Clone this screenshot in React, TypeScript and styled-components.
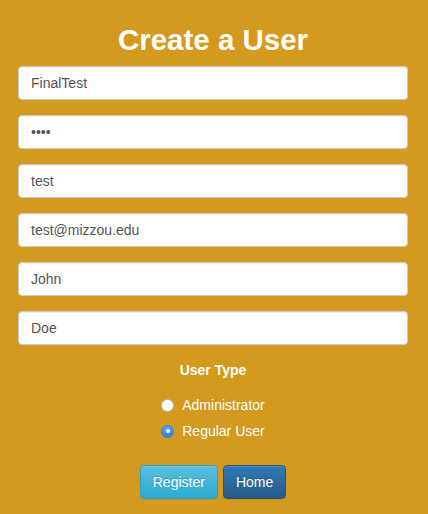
import React from "react";
import styled, { createGlobalStyle } from "styled-components";

const GlobalStyle = createGlobalStyle`
  html, body {
    margin: 0;
    padding: 0;
    background: #d4991f;
  }
  body {
    font-family: "Liberation Sans", Arial, Helvetica, sans-serif;
    font-size: 14px;
    line-height: 20px;
    color: #333;
  }
  * { box-sizing: border-box; }
`;

const Page = styled.div`
  min-height: 514px;
  background: #d4991f;
  padding: 23px 20px 0 18px;
  display: flex;
  flex-direction: column;
  align-items: stretch;
`;

const Title = styled.h2`
  margin: 0 0 10px;
  font-size: 29.5px;
  line-height: 33px;
  font-weight: 700;
  color: #fff;
  text-align: center;
`;

const Fields = styled.div`
  display: flex;
  flex-direction: column;
  gap: 15px;
`;

const Input = styled.input`
  display: block;
  width: 100%;
  height: 34px;
  padding: 6px 12px;
  font-family: inherit;
  font-size: 14px;
  line-height: 20px;
  color: #555;
  background: #fff;
  border: 1px solid #ccc;
  border-radius: 4px;
  box-shadow: inset 0 1px 1px rgba(0, 0, 0, 0.075);
  outline: none;
`;

const Label = styled.div`
  margin-top: 15px;
  font-weight: 700;
  color: #fff;
  text-align: center;
  line-height: 20px;
`;

const RadioGroup = styled.div`
  margin: 15px auto 0;
  display: flex;
  flex-direction: column;
  align-items: flex-start;
  gap: 6px;
`;

const RadioRow = styled.label`
  display: flex;
  align-items: center;
  gap: 8px;
  color: #fff;
  line-height: 20px;
`;

const RadioDot = styled.span<{ $checked?: boolean }>`
  width: 13px;
  height: 13px;
  border-radius: 50%;
  display: flex;
  align-items: center;
  justify-content: center;
  background: ${(p) => (p.$checked ? "linear-gradient(#5aa6f8, #2f7fe8)" : "#fff")};
  border: 1px solid ${(p) => (p.$checked ? "#2f7be0" : "#b5b5b5")};
  &::after {
    content: "";
    display: ${(p) => (p.$checked ? "block" : "none")};
    width: 4px;
    height: 4px;
    border-radius: 50%;
    background: #fff;
  }
`;

const Actions = styled.div`
  margin-top: 24px;
  display: flex;
  justify-content: center;
  gap: 5px;
`;

const Button = styled.button<{ $variant: "info" | "primary" }>`
  height: 34px;
  padding: 6px 12px;
  font-family: inherit;
  font-size: 14px;
  line-height: 20px;
  color: #fff;
  border-radius: 4px;
  border: 1px solid ${(p) => (p.$variant === "info" ? "#28a4c9" : "#245580")};
  background-image: ${(p) =>
    p.$variant === "info"
      ? "linear-gradient(to bottom, #5bc0de 0, #2aabd2 100%)"
      : "linear-gradient(to bottom, #337ab7 0, #265a88 100%)"};
  text-shadow: 0 -1px 0 rgba(0, 0, 0, 0.2);
  box-shadow: inset 0 1px 0 rgba(255, 255, 255, 0.15), 0 1px 1px rgba(0, 0, 0, 0.075);
  cursor: pointer;
`;

const fields = [
  { type: "text", value: "FinalTest" },
  { type: "password", value: "test" },
  { type: "text", value: "test" },
  { type: "email", value: "test@mizzou.edu" },
  { type: "text", value: "John" },
  { type: "text", value: "Doe" },
];

export default function App() {
  return (
    <>
      <GlobalStyle />
      <Page>
        <Title>Create a User</Title>
        <Fields>
          {fields.map((f, i) => (
            <Input key={i} type={f.type} defaultValue={f.value} />
          ))}
        </Fields>
        <Label>User Type</Label>
        <RadioGroup>
          <RadioRow>
            <RadioDot />
            Administrator
          </RadioRow>
          <RadioRow>
            <RadioDot $checked />
            Regular User
          </RadioRow>
        </RadioGroup>
        <Actions>
          <Button $variant="info">Register</Button>
          <Button $variant="primary">Home</Button>
        </Actions>
      </Page>
    </>
  );
}
